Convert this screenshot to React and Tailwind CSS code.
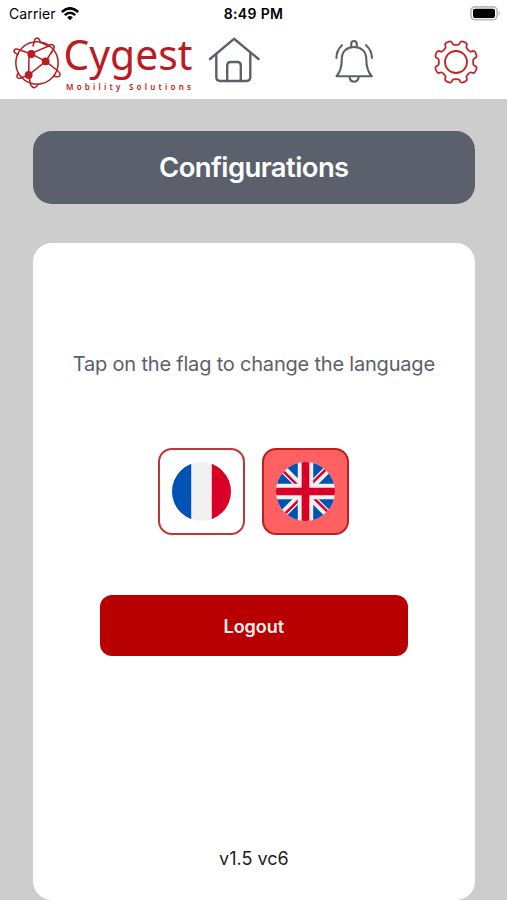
const RED = '#b91c22';
const SLATE = '#5b606a';

// Eight-tooth outline: each tooth is centred at 22.5deg + k * 45deg.
function gearPath() {
  const point = (radius, degrees) => {
    const a = (degrees * Math.PI) / 180;
    return [radius * Math.cos(a), radius * Math.sin(a)];
  };
  const points = [];
  for (let k = 0; k < 8; k++) {
    const c = 22.5 + k * 45;
    points.push(point(17.2, c - 17), point(18, c - 11.5), point(21.9, c - 9.5), point(21.9, c + 9.5), point(18, c + 11.5), point(17.2, c + 17));
  }
  const mid = (a, b) => [(a[0] + b[0]) / 2, (a[1] + b[1]) / 2];
  const start = mid(points[points.length - 1], points[0]);
  let d = `M${start[0]} ${start[1]}`;
  points.forEach((p, i) => {
    const m = mid(p, points[(i + 1) % points.length]);
    d += `Q${p[0]} ${p[1]} ${m[0]} ${m[1]}`;
  });
  return d + 'Z';
}

function Logo() {
  return (
    <svg className="block h-[70px] w-[200px] shrink-0 overflow-visible" viewBox="0 28 200 70" fill="none">
      <g transform="scale(.33333)" stroke={RED} strokeWidth="4.6" strokeLinecap="round" strokeLinejoin="round">
        <circle cx="111" cy="189" r="63.5" />
        <path d="M99 138L104 121Q106 114 112 114Q119 115 121 128" />
        <path d="M121 127L146 138Q150 132 157 134Q165 138 162 145L154 158" />
        <path d="M54 164L44 158Q40 152 45 148Q50 146 57 149L93 161" />
        <path d="M87 161L86 225M93 161L137 184L86 225M93 161L146 138M137 184L156 154" />
        <path d="M137 184L174 213Q183 222 179 228Q175 232 162 229" />
        <path d="M55 219Q50 225 51 231Q54 237 62 234L86 225" />
        <path d="M86 225L92 254Q98 265 104 263Q111 260 115 252" />
        <g fill={RED}>
          <circle cx="94" cy="162" r="9.5" />
          <circle cx="137" cy="184" r="9.5" />
          <circle cx="86" cy="225" r="9.5" />
        </g>
      </g>
      <text x="63.5" y="70" fill={RED} fontFamily="'Noto Sans', sans-serif" fontSize="42" textLength="129" lengthAdjust="spacingAndGlyphs">Cygest</text>
      <text x="66" y="89.6" fill={RED} fontFamily="'Noto Sans', sans-serif" fontWeight="600" fontSize="8" textLength="125" lengthAdjust="spacing">Mobility Solutions</text>
    </svg>
  );
}

function StatusBar() {
  return (
    <div className="relative flex h-7 items-center justify-between pl-[9px] pr-[6px] text-black">
      <div className="flex items-center gap-[5px]">
        <span className="text-[14px] leading-7 tracking-[0.1px]">Carrier</span>
        <svg className="-mt-px h-[14px] w-[18px]" viewBox="0 0 18 14" fill="none" stroke="black" strokeWidth="2.6">
          <path d="M.8 5Q9-2.4 17.2 5" />
          <path d="M3.8 8.1Q9 3.4 14.2 8.1" />
          <path d="M6.2 10.4Q9 7.8 11.8 10.4L9 13.2Z" fill="black" stroke="none" />
        </svg>
      </div>
      <span className="absolute inset-x-0 text-center text-[14px] font-semibold leading-7 tracking-[0.35px]">8:49 PM</span>
      <svg className="-mt-[2px] h-[15px] w-[31px]" viewBox="0 0 31 15">
        <rect x=".9" y=".9" width="26.2" height="12.8" rx="4" fill="white" stroke="#b9b9b9" strokeWidth="1.7" />
        <rect x="3" y="2.7" width="22" height="9.3" rx="2" fill="black" />
        <path d="M28.7 5Q31 7.3 28.7 9.6Z" fill="#aaa" />
      </svg>
    </div>
  );
}

function HomeIcon() {
  return (
    <svg className="h-[50px] w-[54px]" viewBox="207 35 54 50" fill="none" stroke={SLATE} strokeWidth="2.4" strokeLinecap="round" strokeLinejoin="round">
      <path d="M210 59L234 38.8L258.5 59" />
      <path d="M216.3 54V77Q216.3 81 220.3 81H246.5Q250.3 81 250.3 77V54" />
      <path d="M227.2 81V65.5Q227.2 62 230.7 62H237.3Q240.8 62 240.8 65.5V81" />
    </svg>
  );
}

function BellIcon() {
  return (
    <svg className="h-[50px] w-[44px]" viewBox="332 37 44 50" fill="none" stroke={SLATE} strokeWidth="2.1" strokeLinecap="round" strokeLinejoin="round">
      <path d="M351.2 47.2V44Q351.2 41 354 41T356.8 44V47.2" />
      <path d="M336.5 76.3Q341.8 70.5 341.8 59C341.8 51 347.3 47 354 47S366.3 51 366.3 59Q366.3 70.5 371.8 76.3Z" />
      <path d="M349.5 77Q350.2 81.7 354 81.7T358.8 77" />
      <path d="M342 45.2Q336.5 50.2 336.4 58M366 45.2Q371.8 50.2 371.9 58" />
    </svg>
  );
}

function GearIcon() {
  return (
    <svg className="h-[46px] w-[46px]" viewBox="-23 -23 46 46" fill="none" stroke="#c42427" strokeWidth="1.8">
      <path d={gearPath()} />
      <circle r="11" />
    </svg>
  );
}

function FrenchFlag() {
  return (
    <svg className="h-[59px] w-[59px]" viewBox="0 0 59 59">
      <clipPath id="fr"><circle cx="29.5" cy="29.5" r="29.5" /></clipPath>
      <g clipPath="url(#fr)">
        <path fill="#f0f0f0" d="M0 0H59V59H0Z" />
        <path fill="#0052b4" d="M0 0H19.2V59H0Z" />
        <path fill="#d80027" d="M39.8 0H59V59H39.8Z" />
      </g>
    </svg>
  );
}

function BritishFlag() {
  return (
    <svg className="h-[59px] w-[59px]" viewBox="0 0 512 512">
      <clipPath id="gb"><circle cx="256" cy="256" r="256" /></clipPath>
      <g clipPath="url(#gb)">
        <path fill="#f0f0f0" d="M0 0H512V512H0Z" />
        <path fill="#0052b4" d="M53 100L0 100V189H142ZM512 189V100H459L370 189ZM0 323V412H53L142 323ZM412 53V0H323V142ZM100 459V512H189V370ZM189 0H100V53L189 142ZM323 512H412V459L323 370ZM370 323L459 412H512V323Z" />
        <path stroke="#d80027" strokeWidth="67" d="M256 0V512M0 256H512" />
        <path fill="#d80027" d="M323 323L437 437L452 421L354 323ZM189 323L75 437L91 452L189 354ZM189 189L75 75L60 91L158 189ZM323 189L437 75L421 60L323 158Z" />
      </g>
    </svg>
  );
}

export default function App() {
  return (
    <div className="flex h-[900px] w-[507px] flex-col overflow-hidden bg-[#cdcdcd] font-['Inter',sans-serif]">
      <header className="h-[98.5px] shrink-0 bg-white">
        <StatusBar />
        <nav className="flex h-[70px] items-start">
          <Logo />
          <button className="ml-[7px] mt-[7px]"><HomeIcon /></button>
          <button className="ml-[71px] mt-[9px]"><BellIcon /></button>
          <button className="ml-[56.5px] mt-[10.5px]"><GearIcon /></button>
        </nav>
      </header>
      <main className="flex flex-1 flex-col pl-[32.7px] pr-[32px] pt-8">
        <h1 className="flex h-[73.5px] shrink-0 items-center justify-center rounded-[19px] bg-[#5a616c] pt-px text-[27.5px] font-semibold tracking-[-0.6px] text-white">
          Configurations
        </h1>
        <section className="mt-[38.7px] flex h-[657px] shrink-0 flex-col items-center rounded-[19px] bg-white">
          <p className="mt-[106px] whitespace-nowrap text-[20px] leading-[30px] tracking-[-0.2px] text-[#5b606a]">
            Tap on the flag to change the language
          </p>
          <div className="mt-[69.5px] flex gap-[17px]">
            <button className="flex h-[86.5px] w-[87px] items-center justify-center rounded-[14px] border-2 border-[#c23535] bg-white"><FrenchFlag /></button>
            <button className="flex h-[86.5px] w-[87px] items-center justify-center rounded-[14px] border-2 border-[#bd1f20] bg-[#ff6163]"><BritishFlag /></button>
          </div>
          <button className="mt-[60.5px] h-[61px] w-[308px] rounded-[12px] bg-[#b90000] pt-px text-[18px] font-semibold text-[#fff0f0]">Logout</button>
          <p className="mt-[188px] text-[18px] leading-[30px] text-[#1c1c1c]">v1.5 vc6</p>
        </section>
      </main>
    </div>
  );
}
